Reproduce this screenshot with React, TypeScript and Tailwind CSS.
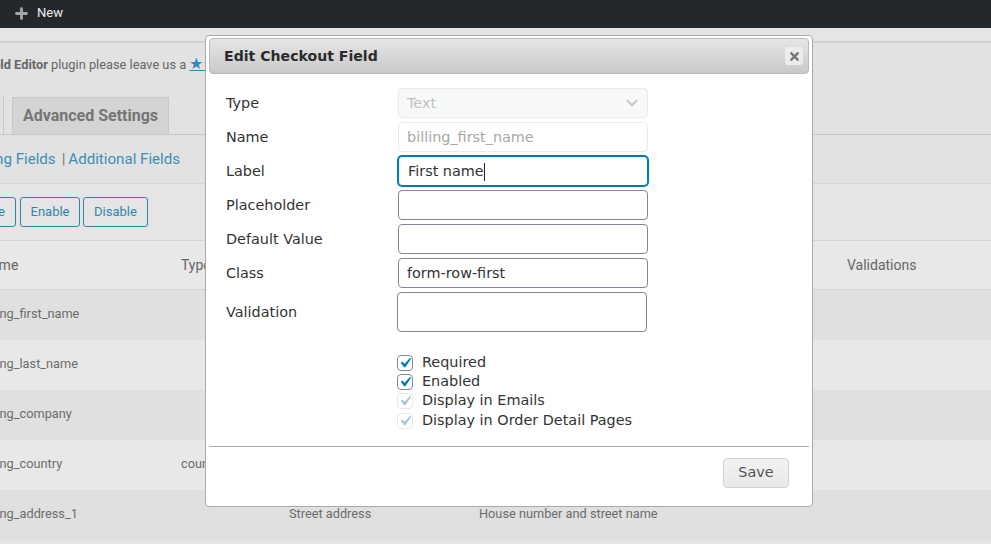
import { ChevronDown, Plus } from "lucide-react";
import { FaTimes } from "react-icons/fa";

const rows = [
  { name: "billing_first_name", type: "", label: "", placeholder: "" },
  { name: "billing_last_name", type: "", label: "", placeholder: "" },
  { name: "billing_company", type: "", label: "", placeholder: "" },
  { name: "billing_country", type: "country", label: "", placeholder: "" },
  { name: "billing_address_1", type: "", label: "Street address", placeholder: "House number and street name" },
];

const checks = [
  { label: "Required", on: true },
  { label: "Enabled", on: true },
  { label: "Display in Emails", on: false },
  { label: "Display in Order Detail Pages", on: false },
];

const TableRow = ({ row, index }: { row: (typeof rows)[number]; index: number }) => (
  <div
    className={`grid grid-cols-[181px_108px_190px_1fr] items-center h-[50px] pb-[2px] text-[12.75px] text-[#6c6c6c] ${
      index % 2 === 0 ? "bg-[#e0e0e0]" : "bg-[#e8e8e8]"
    }`}
  >
    <span className="-ml-[20px]">{row.name}</span>
    <span>{row.type}</span>
    <span>{row.label}</span>
    <span>{row.placeholder}</span>
  </div>
);

const Field = ({ label, value, focus }: { label: string; value?: string; focus?: boolean }) => (
  <div className="flex items-center h-[30px]">
    <span className="w-[172px] pt-[2px]">{label}</span>
    <div
      className={`w-[250px] h-[30px] flex items-center pt-[2px] pr-[8px] rounded-[4px] bg-white border ${
        focus ? "pl-[9px] border-[#007cba] shadow-[0_0_0_1px_#007cba]" : "pl-[8px] border-[#7e8993]"
      }`}
    >
      {value}
      {focus && <span className="w-px h-[18px] bg-[#222]" />}
    </div>
  </div>
);

const CheckRow = ({ label, on }: { label: string; on: boolean }) => (
  <div className="flex items-center h-[19.3px]">
    <span
      className={`w-[16px] h-[16px] rounded-[4px] flex items-center justify-center border bg-white ${
        on ? "border-[#7e8993]" : "border-[#e6e8ea]"
      }`}
    >
      <svg viewBox="0 0 20 20" className={`w-[20px] h-[20px] shrink-0 fill-current ${on ? "text-[#007cba]" : "text-[#a9c6d6]"}`}>
        <path d="M14.83 4.89l1.34.94-5.81 8.38H9.02L5.78 9.67l1.34-1.25 2.57 2.4z" />
      </svg>
    </span>
    <span className="ml-[9px]">{label}</span>
  </div>
);

export default function App() {
  return (
    <div className="relative h-[544px] overflow-hidden bg-[#e5e5e5] font-['Roboto',sans-serif]">
      <div className="flex items-center h-[28px] pb-[2px] bg-[#23282d] text-white text-[13px]">
        <Plus size={17} strokeWidth={4} className="ml-[13px] text-[#a0a5aa]" />
        <span className="ml-[7px] text-[#eee]">New</span>
      </div>

      <div className="mt-[13px] h-[55px] border-t-2 border-[#d0d0d0] bg-[#e2e2e2] flex items-center pb-[9px] whitespace-nowrap text-[12.8px] text-[#666]">
        <span className="-ml-[17px]">
          <b className="font-bold">Field Editor</b> plugin please leave us a{" "}
          <span className="text-[#2e8ab8] underline text-[16px] leading-none">★★★★★</span> rating.
        </span>
      </div>

      <div className="h-[39px] flex items-end border-b border-[#c8c8c8] bg-[#e2e2e2]">
        <div className="w-[4px] h-[38px] border-r border-[#c8c8c8]" />
        <div className="ml-[8px] w-[157px] h-[38px] mb-[-1px] border border-[#c8c8c8] bg-[#d4d4d4] flex items-center justify-center text-[16px] font-bold text-[#757575]">
          Advanced Settings
        </div>
      </div>

      <div className="h-[49px] border-b border-[#d6d6d6] bg-[#e2e2e2] flex items-center whitespace-nowrap text-[15.1px] text-[#3b8fb8]">
        <span className="-ml-[29px]">Billing Fields</span>
        <span className="ml-[6px] mr-[3px] text-[#777]">|</span>
        <span>Additional Fields</span>
      </div>

      <div className="h-[56px] flex items-center gap-[3px] text-[13px] text-[#2f86ad]">
        <div className="-ml-[44px] w-[60px] h-[30px] rounded-[3px] border border-[#2f86ad] flex items-center justify-end pr-[10px]">
          Delete
        </div>
        <div className="ml-[1px] w-[60px] h-[30px] rounded-[3px] border border-[#2f86ad] flex items-center justify-center">
          Enable
        </div>
        <div className="w-[65px] h-[30px] rounded-[3px] border border-[#2f86ad] flex items-center justify-center">
          Disable
        </div>
      </div>

      <div className="grid grid-cols-[181px_666px_1fr] items-center h-[50px] border-y border-[#d6d6d6] bg-[#e8e8e8] text-[14px] text-[#666]">
        <span className="-ml-[19px]">Name</span>
        <span>Type</span>
        <span>Validations</span>
      </div>
      {rows.map((row, i) => (
        <TableRow key={row.name} row={row} index={i} />
      ))}

      <div className="absolute left-[205px] top-[35px] w-[608px] h-[472px] bg-white border border-[#aaaaaa] rounded-[4px] px-[3px] pt-[2px] font-['DejaVu_Sans',sans-serif] text-[14.4px] text-[#333]">
        <div className="flex items-center justify-between h-[36px] rounded-[4px] border border-[#bbbbbb] bg-gradient-to-b from-[#e6e6e6] to-[#c9c9c9] pl-[14px] pr-[5px]">
          <span className="font-bold text-[14.1px] mt-[1px] text-[#2b2b2b]">Edit Checkout Field</span>
          <span className="w-[18px] h-[18px] rounded-[3px] bg-[#ececec] flex items-center justify-center">
            <FaTimes size={13} className="text-[#777]" />
          </span>
        </div>

        <div className="pl-[17px] pt-[14px] flex flex-col gap-[4px]">
          <div className="flex items-center h-[30px]">
            <span className="w-[172px] pt-[2px]">Type</span>
            <div className="w-[250px] h-[30px] flex items-center justify-between pl-[8px] pr-[6px] rounded-[4px] border border-[#e8eaeb] bg-[#f7f8f8] text-[#c0c0c0]">
              <span className="pt-[2px]">Text</span>
              <ChevronDown size={18} strokeWidth={2.5} className="text-[#c4c4c4]" />
            </div>
          </div>
          <div className="flex items-center h-[30px]">
            <span className="w-[172px] pt-[2px]">Name</span>
            <div className="w-[250px] h-[30px] flex items-center pt-[2px] px-[8px] rounded-[4px] border border-[#e8eaeb] text-[#a8a8a8]">
              billing_first_name
            </div>
          </div>
          <Field label="Label" value="First name" focus />
          <Field label="Placeholder" />
          <Field label="Default Value" />
          <Field label="Class" value="form-row-first" />
          <div className="flex items-center h-[40px]">
            <span className="w-[171px] pt-[2px]">Validation</span>
            <div className="w-[250px] h-[40px] rounded-[4px] border border-[#7e8993]" />
          </div>
        </div>

        <div className="pl-[188px] mt-[21px] flex flex-col">
          {checks.map((c) => (
            <CheckRow key={c.label} label={c.label} on={c.on} />
          ))}
        </div>

        <div className="mt-[16px] border-t border-[#aaaaaa] flex justify-end pt-[11px] pr-[20px]">
          <div className="w-[66px] h-[30px] rounded-[4px] border border-[#d3d3d3] bg-gradient-to-b from-[#f2f2f2] to-[#e8e8e8] flex items-center justify-center text-[#555]">
            Save
          </div>
        </div>
      </div>
    </div>
  );
}
